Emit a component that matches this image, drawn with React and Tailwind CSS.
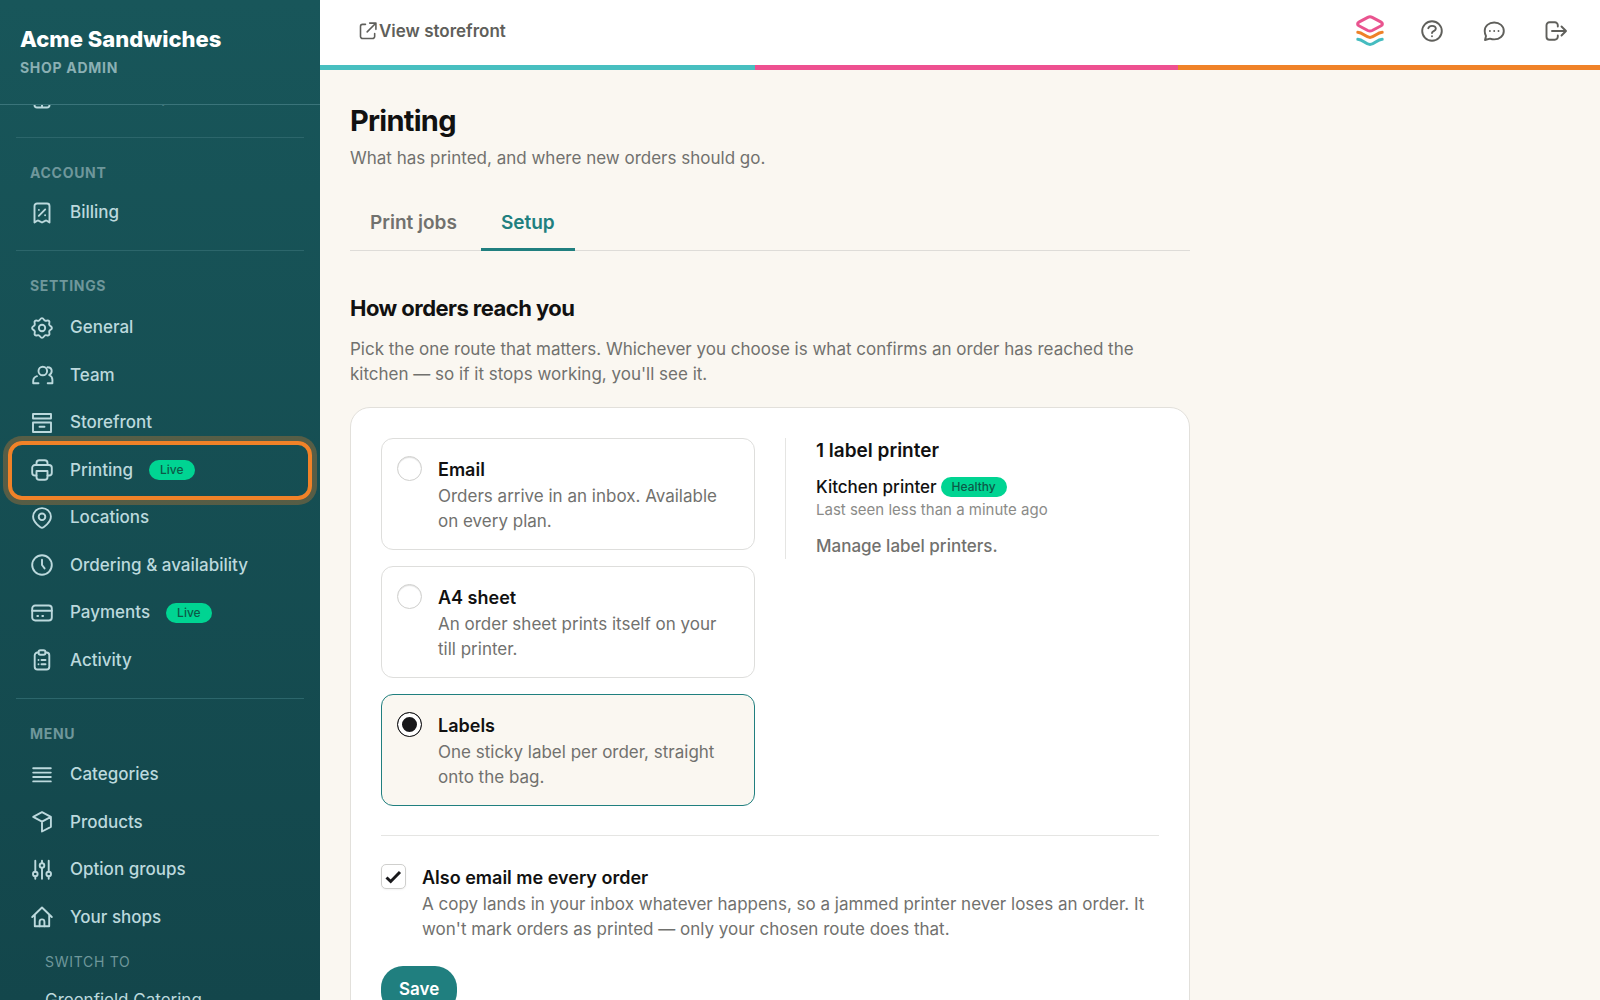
import React, { useState } from "react";

const iconPaths = {
  shop: (
    <>
      <rect x="4.5" y="2.5" width="15" height="20" rx="2.5" />
      <path d="M12 13v9M4.5 13h15" />
    </>
  ),
  billing: (
    <>
      <path d="M4.5 21.5V5A2.5 2.5 0 0 1 7 2.5h10A2.5 2.5 0 0 1 19.5 5v16.5l-2.7-1.8c-.6-.4-1.2-.3-1.7.1L12 21.5l-3.1-1.7c-.5-.4-1.1-.5-1.7-.1z" />
      <path d="M8.8 14.8l6.4-6.4M8.9 8.9h.01M15.1 14.3h.01" />
    </>
  ),
  gear: (
    <>
      <path d="M12 2.1c1.9 0 1.5 2 3.1 2.6s2.600-1.100 3.900.3-.4 2.400.3 3.900 2.600 1.200 2.600 3.100-2 1.500-2.600 3.100 1.100 2.600-.3 3.900-2.400-.4-3.900.3-1.200 2.600-3.100 2.600-1.500-2-3.100-2.600-2.600 1.100-3.900-.3.4-2.400-.3-3.900S2.100 13.900 2.100 12s2-1.500 2.600-3.100-1.100-2.600.3-3.900 2.400.4 3.900-.3S10.100 2.100 12 2.100z" />
      <circle cx="12" cy="12" r="3.2" />
    </>
  ),
  team: (
    <>
      <circle cx="12.8" cy="8" r="4.3" />
      <path d="M8.5 20.2H3.2v-2c0-2.6 1.5-4.300 3.800-5M17.500 4.200c2.700 0 4.200 1.400 4.200 3.900 0 2-1.200 3.300-2.600 3.900 2.100 1 3.300 2.500 3.300 4.700v3.500h-4.700" />
    </>
  ),
  storefront: (
    <>
      <rect x="3" y="3" width="18" height="4.5" />
      <rect x="3" y="11.5" width="18" height="9.5" />
      <path d="M9.5 15.8h5" />
    </>
  ),
  printer: (
    <>
      <path d="M6.5 7V5a2.800 2.800 0 0 1 2.800-2.800h5.400A2.800 2.800 0 0 1 17.500 5v2" />
      <path d="M6.5 17.500H5A2.800 2.800 0 0 1 2.200 14.700V9.800A2.800 2.800 0 0 1 5 7h14a2.800 2.800 0 0 1 2.800 2.800v4.900a2.800 2.800 0 0 1-2.800 2.800h-1.500" />
      <path d="M6.5 13h11v6a2.800 2.800 0 0 1-2.800 2.800H9.300A2.800 2.800 0 0 1 6.500 19z" />
    </>
  ),
  pin: (
    <>
      <path d="M12 21.8c-1.400 0-8.900-5.400-8.900-11.200a8.900 8.500 0 0 1 17.800 0c0 5.800-7.500 11.200-8.900 11.200z" />
      <circle cx="12" cy="10.8" r="3.3" />
    </>
  ),
  clock: (
    <>
      <circle cx="12" cy="12" r="9.8" />
      <path d="M12 6.800V12l2.600 3.400" />
    </>
  ),
  card: (
    <>
      <rect x="2.2" y="4.5" width="19.6" height="15" rx="3" />
      <path d="M2.2 9.800h19.600M7.300 15h.8M12.300 15h.8" />
    </>
  ),
  clipboard: (
    <>
      <path d="M8.5 4.500h-1A2.800 2.800 0 0 0 4.700 7.300v11.400a2.800 2.800 0 0 0 2.800 2.800h9a2.800 2.800 0 0 0 2.800-2.800V7.300a2.800 2.800 0 0 0-2.800-2.800h-1" />
      <rect x="8.5" y="2.2" width="7" height="4.5" rx="2" />
      <path d="M8.5 12h.01M11.500 12h4M8.500 16.300h.01M11.500 16.300h4" />
    </>
  ),
  lines: <path d="M3.2 5.200h17.600M3.200 9.600h17.600M3.200 14h17.600M3.200 18.400h17.600" />,
  box: (
    <path d="M12 11.600L3.200 6.900 12 2.200l8.900 4.700zM20.900 6.900v9.900L12 21.500v-9.900" />
  ),
  sliders: (
    <>
      <path d="M5.300 2.800v10.700M5.300 18.500v2.300M12 2.800v2.300M12 10v10.800M18.700 2.800v10.700M18.700 18.500v2.300" />
      <circle cx="5.300" cy="16" r="2.3" />
      <circle cx="12" cy="7.500" r="2.3" />
      <circle cx="18.700" cy="16" r="2.3" />
    </>
  ),
  home: (
    <>
      <path d="M2.200 12L12 2.500l9.800 9.500M4.800 9.800v11.500h14.400V9.800" />
      <path d="M9.600 21.300v-4.500a2.400 2.400 0 0 1 4.800 0v4.500" />
    </>
  ),
  external: (
    <>
      <path d="M9 4H5.500A2.500 2.500 0 0 0 3 6.500v12A2.500 2.500 0 0 0 5.500 21h12a2.500 2.500 0 0 0 2.500-2.500V15" />
      <path d="M14 2.500h7.500V10M21 3L11 13" />
    </>
  ),
  help: (
    <>
      <circle cx="12" cy="12" r="9.8" />
      <path d="M8.300 9.200C8.800 7.700 10.300 6.900 12 6.900c2.100 0 3.800 1.100 3.800 2.900 0 2.400-3.800 2.300-3.800 4.200M12 17.200h.01" />
    </>
  ),
  chat: (
    <>
      <path d="M12.200 3.500c5.400 0 9.600 3.500 9.600 8.400s-4.200 8.500-9.600 8.500c-1.500 0-2.900-.3-4.200-.8l-5 1.400 1-4.100c-.9-1.400-1.300-3-1.300-5 0-4.900 4.100-8.400 9.500-8.400z" />
      <path d="M7.900 12h.01M12.200 12h.01M16.500 12h.01" />
    </>
  ),
  logout: (
    <>
      <path d="M13.800 7.500V6.300a3 3 0 0 0-3-3H5.500a3 3 0 0 0-3 3v11.400a3 3 0 0 0 3 3h5.300a3 3 0 0 0 3-3v-1.200" />
      <path d="M8 12h13.800M17.500 7.500L22 12l-4.500 4.500" />
    </>
  ),
};

const Icon = ({ name, className = "size-6" }) => (
  <svg
    viewBox="0 0 24 24"
    fill="none"
    stroke="currentColor"
    strokeWidth="1.9"
    strokeLinecap="round"
    strokeLinejoin="round"
    aria-hidden="true"
    className={`shrink-0 ${className}`}
  >
    {iconPaths[name]}
  </svg>
);

const Logo = () => (
  <svg viewBox="0 0 28 32" fill="none" strokeWidth="3" strokeLinecap="round" strokeLinejoin="round" className="h-8 w-7" aria-hidden="true">
    <path
      stroke="#e9548f"
      d="M11.800 2.400c1.400-.7 3-.7 4.400 0l8.500 4.400c2.300 1.200 2.300 3 0 4.200l-8.500 4.500c-1.400.7-3 .7-4.400 0l-8.500-4.500c-2.300-1.200-2.300-3 0-4.200z"
    />
    <path stroke="#ee8128" d="M1.800 17.300c5 .2 8 5.200 12.200 5.200s7.200-5 12.200-5.200" />
    <path stroke="#45bcc0" d="M1.800 24.200c5 .2 8 5.400 12.200 5.400s7.200-5.200 12.200-5.400" />
  </svg>
);

const settingsItems = [
  { label: "General", icon: "gear" },
  { label: "Team", icon: "team" },
  { label: "Storefront", icon: "storefront" },
  { label: "Printing", icon: "printer", live: true, active: true },
  { label: "Locations", icon: "pin" },
  { label: "Ordering & availability", icon: "clock" },
  { label: "Payments", icon: "card", live: true },
  { label: "Activity", icon: "clipboard" },
];

const menuItems = [
  { label: "Categories", icon: "lines" },
  { label: "Products", icon: "box" },
  { label: "Option groups", icon: "sliders" },
  { label: "Your shops", icon: "home" },
];

const routes = [
  { id: "email", title: "Email", text: "Orders arrive in an inbox. Available on every plan." },
  { id: "a4", title: "A4 sheet", text: "An order sheet prints itself on your till printer." },
  { id: "labels", title: "Labels", text: "One sticky label per order, straight onto the bag." },
];

const Badge = ({ children }) => (
  <span className="flex h-5 items-center rounded-full bg-[#00d492] px-[11px] text-[12px] leading-4 font-medium text-[#0c5a48]">{children}</span>
);

const NavItem = ({ item }) => (
  <li className="relative flex">
    <a href="#" aria-current={item.active ? "page" : undefined} className="flex flex-1 items-center gap-4 px-3.5 text-[17px] font-medium text-[#bcd9dd]">
      <Icon name={item.icon} />
      <span>{item.label}</span>
      {item.live && <Badge>Live</Badge>}
    </a>
    {item.active && (
      <span className="pointer-events-none absolute -inset-x-2 -inset-y-1.5 rounded-[14px] border-4 border-[#f08228] ring-[5px] ring-[#f08228]/30" />
    )}
  </li>
);

const NavHeading = ({ children }) => (
  <h2 className="px-3.5 text-[14px] leading-5 font-bold tracking-wider text-[#6f979b] uppercase">{children}</h2>
);

const Sidebar = () => (
  <aside className="flex w-80 shrink-0 flex-col bg-linear-to-b from-[#18565a] to-[#13464b]">
    <div className="h-[105px] shrink-0 border-b border-[#3a747a] px-5 pt-[23px]">
      <p className="text-[22px] leading-8 font-extrabold text-white">Acme Sandwiches</p>
      <p className="text-[14px] leading-[26px] font-bold tracking-wider text-[#8bb0b4] uppercase">Shop admin</p>
    </div>
    <nav className="min-h-0 flex-1 overflow-hidden px-4">
      <ul className="-mt-8 grid h-12 auto-rows-fr">
        <NavItem item={{ label: "Quick set up", icon: "shop" }} />
      </ul>
      <div className="mt-4 border-t border-[#2c666b] pt-[25px]">
        <NavHeading>Account</NavHeading>
        <ul className="mt-1.5 grid h-12 auto-rows-fr">
          <NavItem item={{ label: "Billing", icon: "billing" }} />
        </ul>
      </div>
      <div className="mt-[13px] border-t border-[#2c666b] pt-[25px]">
        <NavHeading>Settings</NavHeading>
        <ul className="mt-2 grid h-[380px] auto-rows-fr">
          {settingsItems.map((item) => (
            <NavItem key={item.label} item={item} />
          ))}
        </ul>
      </div>
      <div className="mt-3.5 border-t border-[#2c666b] pt-[25px]">
        <NavHeading>Menu</NavHeading>
        <ul className="mt-[7px] grid h-[190px] auto-rows-fr">
          {menuItems.map((item) => (
            <NavItem key={item.label} item={item} />
          ))}
        </ul>
        <div className="px-[29px] pt-[11px]">
          <h3 className="text-[14px] leading-5 tracking-wider text-[#6f979b] uppercase">Switch to</h3>
          <a href="#" className="mt-4 block text-[17px] leading-6 text-[#bcd9dd]">
            Greenfield Catering
          </a>
        </div>
      </div>
    </nav>
  </aside>
);

const TopBar = () => (
  <header>
    <div className="flex h-[65px] items-center bg-white pr-8 pb-1 pl-[38px] text-[#5f5f5b]">
      <a href="#" className="flex items-center gap-px text-[17px] leading-6 font-semibold">
        <Icon name="external" className="size-5" />
        View storefront
      </a>
      <div className="ml-auto flex items-center gap-9">
        <a href="#" aria-label="Home">
          <Logo />
        </a>
        <div className="flex items-center gap-[38px]">
          <button type="button" aria-label="Help" className="flex">
            <Icon name="help" />
          </button>
          <button type="button" aria-label="Messages" className="flex">
            <Icon name="chat" />
          </button>
          <button type="button" aria-label="Log out" className="flex">
            <Icon name="logout" />
          </button>
        </div>
      </div>
    </div>
    <div className="flex h-[5px]">
      <div className="w-[34%] bg-[#48bfc0]" />
      <div className="w-[33%] bg-[#ee5090]" />
      <div className="flex-1 bg-[#f08228]" />
    </div>
  </header>
);

const RouteOption = ({ route, checked, onChange }) => (
  <label
    className={`flex gap-4 rounded-xl border p-[15px] ${checked ? "border-[#207f7f] bg-[#faf7f1]" : "border-[#dededc] bg-white"}`}
  >
    <input
      type="radio"
      name="route"
      value={route.id}
      checked={checked}
      onChange={onChange}
      className="mt-0.5 size-[25px] shrink-0 appearance-none rounded-full border border-[#cfcfcd] bg-white shadow-[inset_0_1px_1px_rgba(0,0,0,0.12)] checked:border-[#18181b] checked:bg-[#18181b] checked:shadow-[inset_0_0_0_4px_#fff]"
    />
    <span className="text-[17px] leading-[25px] text-[#71716e]">
      <span className="block pt-0.5 text-[18px] leading-7 font-semibold text-[#111]">{route.title}</span>
      {route.text}
    </span>
  </label>
);

export default function App() {
  const [route, setRoute] = useState("labels");
  const [copy, setCopy] = useState(true);

  return (
    <div className="flex h-screen bg-[#faf7f1] font-[Inter,sans-serif] text-[#111]">
      <Sidebar />
      <div className="flex min-w-0 flex-1 flex-col">
        <TopBar />
        <main className="min-h-0 flex-1 overflow-y-auto px-[30px] pt-[31px] [scrollbar-width:none]">
          <div className="max-w-[840px]">
            <h1 className="text-[29px] leading-10 font-bold tracking-tight">Printing</h1>
            <p className="mt-[5px] text-[17px] leading-[25px] text-[#71716e]">What has printed, and where new orders should go.</p>

            <div role="tablist" className="mt-[22px] flex gap-1 border-b border-[#dedcd8] text-[19px] leading-7 font-semibold">
              <button type="button" role="tab" aria-selected="false" className="px-5 pt-4 pb-[13px] text-[#71716e]">
                Print jobs
              </button>
              <button type="button" role="tab" aria-selected="true" className="-mb-px border-b-[3px] border-[#207f7f] px-5 pt-4 pb-[11px] text-[#207f7f]">
                Setup
              </button>
            </div>

            <h2 className="mt-[39px] text-[22px] leading-9 font-bold tracking-tight">How orders reach you</h2>
            <p className="mt-[11px] text-[17px] leading-[25px] text-[#71716e]">
              Pick the one route that matters. Whichever you choose is what confirms an order has reached the kitchen — so if it
              stops working, you'll see it.
            </p>

            <form className="mt-5 rounded-[20px] border border-[#e2e0db] bg-white p-[30px]" onSubmit={(e) => e.preventDefault()}>
              <div className="grid grid-cols-2 gap-[30px]">
                <div className="flex flex-col gap-4">
                  {routes.map((r) => (
                    <RouteOption key={r.id} route={r} checked={route === r.id} onChange={() => setRoute(r.id)} />
                  ))}
                </div>
                <div className="self-start border-l border-[#e5e5e3] pl-[30px]">
                  <h3 className="text-[19px] leading-[26px] font-semibold">1 label printer</h3>
                  <p className="mt-2.5 flex items-center gap-1 text-[17px] leading-[26px] font-medium">
                    Kitchen printer
                    <Badge>Healthy</Badge>
                  </p>
                  <p className="text-[15px] leading-5 text-[#8b8b88]">Last seen less than a minute ago</p>
                  <a href="#" className="mt-3.5 block text-[17px] leading-[25px] font-medium text-[#71716e]">
                    Manage label printers.
                  </a>
                </div>
              </div>

              <div className="mt-[29px] border-t border-[#e5e5e3] pt-7">
                <label className="flex gap-4">
                  <span className="relative shrink-0">
                    <input
                      type="checkbox"
                      checked={copy}
                      onChange={(e) => setCopy(e.target.checked)}
                      className="block size-[25px] appearance-none rounded-[5px] border border-[#cfcfcd] bg-white shadow-xs"
                    />
                    {copy && (
                      <svg viewBox="0 0 25 25" fill="none" stroke="#18181b" strokeWidth="3" className="pointer-events-none absolute top-0 left-0 size-[25px]" aria-hidden="true">
                        <path d="M5.500 13.500l4.200 4L19 8" />
                      </svg>
                    )}
                  </span>
                  <span className="text-[17px] leading-[25px] text-[#71716e]">
                    <span className="block text-[18px] leading-7 font-semibold text-[#111]">Also email me every order</span>
                    A copy lands in your inbox whatever happens, so a jammed printer never loses an order. It won't mark orders as
                    printed — only your chosen route does that.
                  </span>
                </label>
              </div>

              <button type="submit" className="mt-6 h-12 rounded-[22px] bg-[#207f7f] px-[18px] text-[17px] font-semibold text-white">
                Save
              </button>
            </form>
          </div>
        </main>
      </div>
    </div>
  );
}
